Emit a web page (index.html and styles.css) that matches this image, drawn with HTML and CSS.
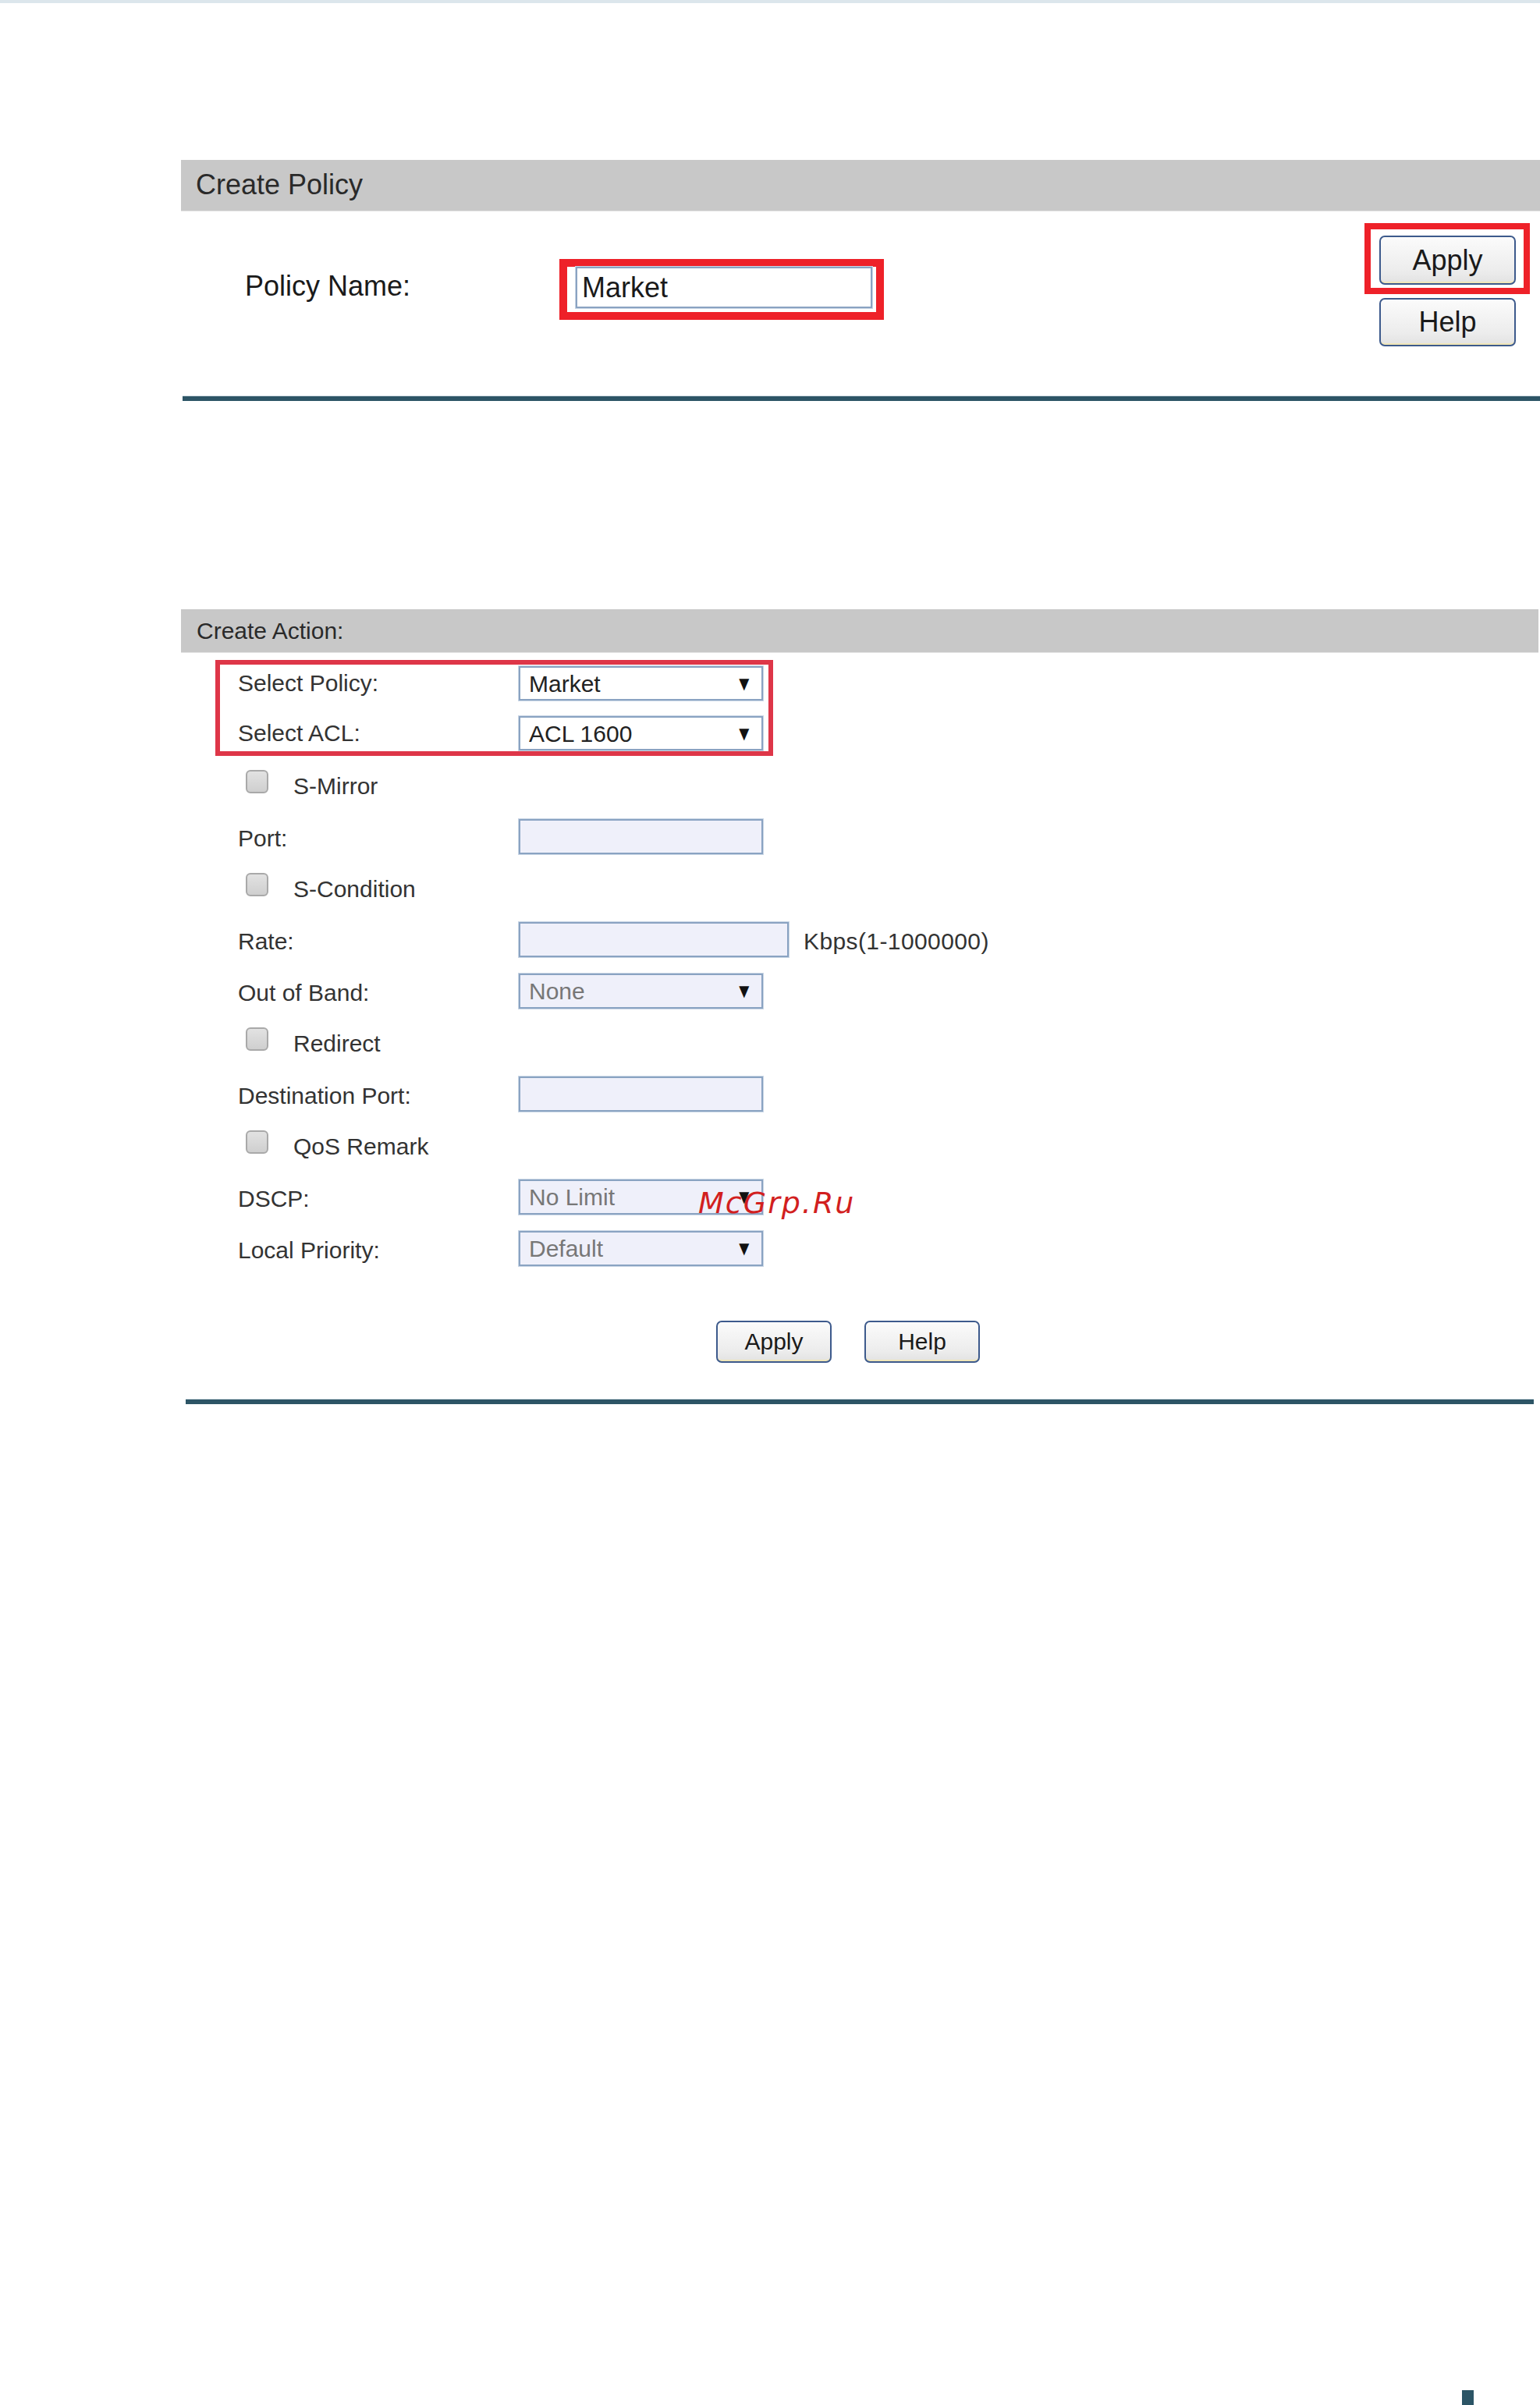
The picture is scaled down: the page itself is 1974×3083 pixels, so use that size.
FILE: index.html
```html
<!DOCTYPE html>
<html lang="en">
<head>
    <meta charset="utf-8">
    <link rel="stylesheet" href="styles.css">
</head>
<body>
    <div class="page">
        <!-- Create Policy -->
        <div class="bar bar-large">Create Policy</div>
        <div class="policy-body">
            <div class="policy-field">
                <label class="policy-label" for="policyName">Policy Name:</label>
                <div class="mark mark-input">
                    <input id="policyName" class="text-input name-input" type="text" value="Market">
                </div>
            </div>
            <div class="policy-buttons">
                <div class="mark mark-button">
                    <button class="btn btn-large">Apply</button>
                </div>
                <button class="btn btn-large btn-help">Help</button>
            </div>
        </div>
        <div class="divider"></div>

        <!-- Create Action -->
        <div class="bar bar-small">Create Action:</div>
        <div class="mark mark-select">
            <div class="row row-boxed">
                <span class="label">Select Policy:</span>
                <div class="select-wrap">
                    <select class="select select-on"><option>Market</option></select>
                </div>
            </div>
            <div class="row row-boxed">
                <span class="label">Select ACL:</span>
                <div class="select-wrap">
                    <select class="select select-on"><option>ACL 1600</option></select>
                </div>
            </div>
        </div>

        <div class="rows">
            <div class="row row-check">
                <input type="checkbox" class="check" id="sMirror">
                <label for="sMirror">S-Mirror</label>
            </div>
            <div class="row row-field">
                <span class="label">Port:</span>
                <input class="text-input field-input" type="text" disabled>
            </div>
            <div class="row row-check">
                <input type="checkbox" class="check" id="sCondition">
                <label for="sCondition">S-Condition</label>
            </div>
            <div class="row row-field">
                <span class="label">Rate:</span>
                <input class="text-input field-input rate-input" type="text" disabled>
                <span class="unit">Kbps(1-1000000)</span>
            </div>
            <div class="row row-field">
                <span class="label">Out of Band:</span>
                <div class="select-wrap">
                    <select class="select" disabled><option>None</option></select>
                </div>
            </div>
            <div class="row row-check">
                <input type="checkbox" class="check" id="redirect">
                <label for="redirect">Redirect</label>
            </div>
            <div class="row row-field">
                <span class="label">Destination Port:</span>
                <input class="text-input field-input" type="text" disabled>
            </div>
            <div class="row row-check">
                <input type="checkbox" class="check" id="qosRemark">
                <label for="qosRemark">QoS Remark</label>
            </div>
            <div class="row row-field">
                <span class="label">DSCP:</span>
                <div class="select-wrap">
                    <select class="select" disabled><option>No Limit</option></select>
                </div>
            </div>
            <div class="row row-field">
                <span class="label">Local Priority:</span>
                <div class="select-wrap">
                    <select class="select" disabled><option>Default</option></select>
                </div>
            </div>
        </div>

        <div class="action-buttons">
            <button class="btn btn-small">Apply</button>
            <button class="btn btn-small">Help</button>
        </div>
        <div class="divider divider-short"></div>

        <div class="watermark">McGrp.Ru</div>

        <div class="footer">
            <span class="corner"></span>
        </div>
    </div>
</body>
</html>
```

FILE: styles.css
```css
html, body {
    margin: 0;
    padding: 0;
}

body {
    font-family: "Liberation Sans", Arial, sans-serif;
    color: #222;
    background: #fff;
}

.page {
    position: relative;
    min-height: 3083px;
    box-sizing: border-box;
    border-top: 4px solid #dce6ec;
    padding-left: 232px;
    display: flex;
    flex-direction: column;
}

/* grey section bars */
.bar {
    background: #c8c8c8;
    color: #2a2a2a;
    border-bottom: 1px solid #e2e2e2;
    box-sizing: border-box;
}

.bar-large {
    margin-top: 201px;
    height: 66px;
    line-height: 64px;
    font-size: 36px;
    padding-left: 19px;
}

.bar-small {
    margin-top: 267px;
    height: 56px;
    line-height: 56px;
    font-size: 30px;
    padding-left: 20px;
    margin-right: 2px;
}

/* red highlight frames */
.mark {
    box-sizing: border-box;
}

.mark-input {
    border: 10px solid #ee2129;
    padding: 0 5px 5px 11px;
}

.mark-button {
    border: 8px solid #ee2129;
    padding: 8px 10px 4px 11px;
}

.mark-select {
    margin: 9px 0 0 44px;
    width: 715px;
    border: 6px solid #de3648;
    padding: 2px 7px 1px 23px;
    display: flex;
    flex-direction: column;
    gap: 20px;
}

/* create policy */
.policy-body {
    height: 236px;
    box-sizing: border-box;
    padding-top: 15px;
    display: flex;
    justify-content: space-between;
    align-items: flex-start;
}

.policy-field {
    margin-top: 46px;
    padding-left: 82px;
    display: flex;
    align-items: center;
}

.policy-label {
    width: 403px;
    font-size: 36px;
    color: #1a1a1a;
    padding-bottom: 8px;
}

.text-input {
    box-sizing: border-box;
    margin: 0;
    font-family: inherit;
    border: 2px solid #8aa3c2;
    box-shadow: 0 0 0 1px #c9d6e5;
    outline: none;
}

.name-input {
    width: 380px;
    height: 53px;
    font-size: 36px;
    padding: 0 6px;
    color: #1a1a1a;
    background: #fff;
}

.policy-buttons {
    margin-right: 13px;
    display: flex;
    flex-direction: column;
}

.btn {
    font-family: inherit;
    color: #1a1a1a;
    border: 2px solid #3d5a8c;
    border-radius: 7px;
    background: linear-gradient(#fbfbfb, #ececec 75%, #e2e2e2);
    box-shadow: inset 0 -4px 0 -2px #f0e6b8;
    cursor: pointer;
    padding: 0;
}

.btn-large {
    width: 175px;
    height: 63px;
    font-size: 36px;
}

.btn-help {
    height: 62px;
    margin: 5px 0 0 19px;
}

.divider {
    height: 6px;
    background: #2d5566;
    border-top: 1px solid #d3dfe5;
    box-sizing: content-box;
    margin-left: 2px;
}

.divider-short {
    margin: 46px 8px 0 6px;
}

/* create action rows */
.rows {
    margin-top: 6px;
    padding-left: 73px;
}

.row {
    display: flex;
    align-items: center;
    font-size: 30px;
    color: #333;
}

.row-boxed {
    height: 44px;
}

.rows .row {
    height: 66px;
}

.label {
    width: 360px;
    flex-shrink: 0;
}

.row-field .label,
.row-field .unit {
    padding-top: 2px;
}

.row-check {
    padding-left: 10px;
}

.check {
    appearance: none;
    -webkit-appearance: none;
    width: 29px;
    height: 30px;
    margin: 0 32px 12px 0;
    border: 2px solid #a9a9a9;
    border-radius: 6px;
    background: linear-gradient(#e2e2e2, #cfcfcf);
    box-sizing: border-box;
}

.field-input {
    width: 313px;
    height: 45px;
    background: #eff0fa;
    margin-top: -4px;
}

.rate-input {
    width: 346px;
}

.unit {
    margin-left: 19px;
    letter-spacing: 0.4px;
}

.select-wrap {
    position: relative;
    width: 313px;
    height: 45px;
    margin-top: -4px;
}

.row-boxed .select-wrap {
    height: 44px;
    margin-top: 0;
}

.select-wrap::after {
    content: "\25BC";
    position: absolute;
    right: 17px;
    top: 50%;
    transform: translateY(-50%) scaleX(0.85);
    font-family: "DejaVu Sans", sans-serif;
    font-size: 20px;
    color: #111;
    pointer-events: none;
}

.select {
    appearance: none;
    -webkit-appearance: none;
    width: 100%;
    height: 100%;
    box-sizing: border-box;
    margin: 0;
    padding: 0 0 0 11px;
    font-family: inherit;
    font-size: 30px;
    color: #777;
    background: #eff0fa;
    border: 2px solid #8aa3c2;
    box-shadow: 0 0 0 1px #c9d6e5;
    border-radius: 0;
    opacity: 1;
}

.select-on {
    color: #222;
    background: #fff;
}

.action-buttons {
    margin-top: 58px;
    padding-left: 686px;
    display: flex;
    gap: 42px;
}

.btn-small {
    width: 148px;
    height: 54px;
    font-size: 30px;
}

.watermark {
    position: absolute;
    left: 895px;
    top: 1519px;
    font-family: "DejaVu Sans", sans-serif;
    font-style: italic;
    font-size: 38px;
    line-height: 38px;
    letter-spacing: 2px;
    color: #d21f1f;
}

.footer {
    margin-top: auto;
    padding-left: 1642px;
    height: 19px;
}

.corner {
    display: block;
    width: 15px;
    height: 19px;
    background: #2c5566;
}
```
